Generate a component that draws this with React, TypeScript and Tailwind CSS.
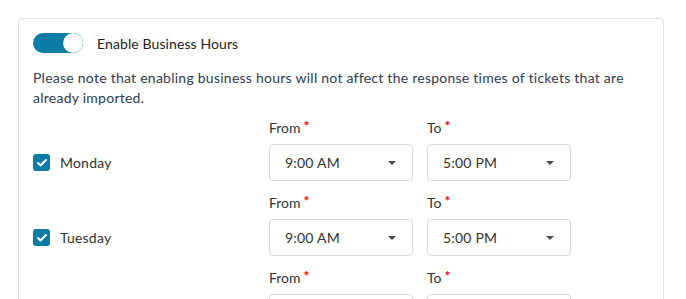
import { Check } from 'lucide-react';

const DAYS = ['Monday', 'Tuesday', 'Wednesday'];

const Caret = () => (
  <svg width="8" height="4" viewBox="0 0 8 4" className="ml-auto">
    <path d="M0 0h8L4 4z" fill="#4a4a4a" />
  </svg>
);

const TimeSelect = ({ label, value }: { label: string; value: string }) => (
  <div className="flex flex-col w-[144px]">
    <div className="text-[14px] leading-[16px] text-[#333] h-[16px] flex items-start">
      {label}
      <span className="text-[#f00] ml-[3px] text-[14px] leading-[12px] font-bold">*</span>
    </div>
    <div className="mt-[8px] h-[37px] rounded-[4px] border border-[#d9d9d9] bg-white flex items-center pl-[15px] pr-[16px] text-[14px] text-[#333] tracking-[0.2px]">
      <span>{value}</span>
      <Caret />
    </div>
  </div>
);

const DayRow = ({ day }: { day: string }) => (
  <div className="flex items-end">
    <div className="w-[236px] h-[37px] flex items-center">
      <span className="w-[17px] h-[17px] rounded-[3px] bg-[#0b7ca5] flex items-center justify-center">
        <Check size={12} strokeWidth={4} color="white" />
      </span>
      <span className="ml-[10px] text-[14px] text-[#333] tracking-[0.2px]">{day}</span>
    </div>
    <div className="flex gap-[14px]">
      <TimeSelect label="From" value="9:00 AM" />
      <TimeSelect label="To" value="5:00 PM" />
    </div>
  </div>
);

const App = () => {
  return (
    <div
      className="w-[686px] h-[299px] overflow-hidden bg-white pt-[18px] pl-[18px]"
      style={{ fontFamily: 'Lato, "Open Sans", sans-serif' }}
    >
      <div className="w-[646px] h-[400px] border border-[#dedede] rounded-[4px] pt-[14px] pl-[14px] pr-[14px]">
        <div className="flex items-center h-[20px]">
          <div className="w-[50px] h-[20px] rounded-full bg-[#0b7ca5] relative">
            <span className="absolute right-0 top-0 w-[20px] h-[20px] rounded-full bg-white shadow-[0_0_2px_rgba(0,0,0,0.25)]" />
          </div>
          <span className="ml-[14px] text-[14px] text-[#222] tracking-[0.1px]">Enable Business Hours</span>
        </div>
        <p className="mt-[15px] w-[600px] text-[14px] leading-[20px] text-[#2f3b52] tracking-[0.25px]">
          Please note that enabling business hours will not affect the response times of tickets that are
          already imported.
        </p>
        <div className="mt-[12px] flex flex-col gap-[14px]">
          {DAYS.map(day => (
            <DayRow key={day} day={day} />
          ))}
        </div>
      </div>
    </div>
  );
};

export default App;
